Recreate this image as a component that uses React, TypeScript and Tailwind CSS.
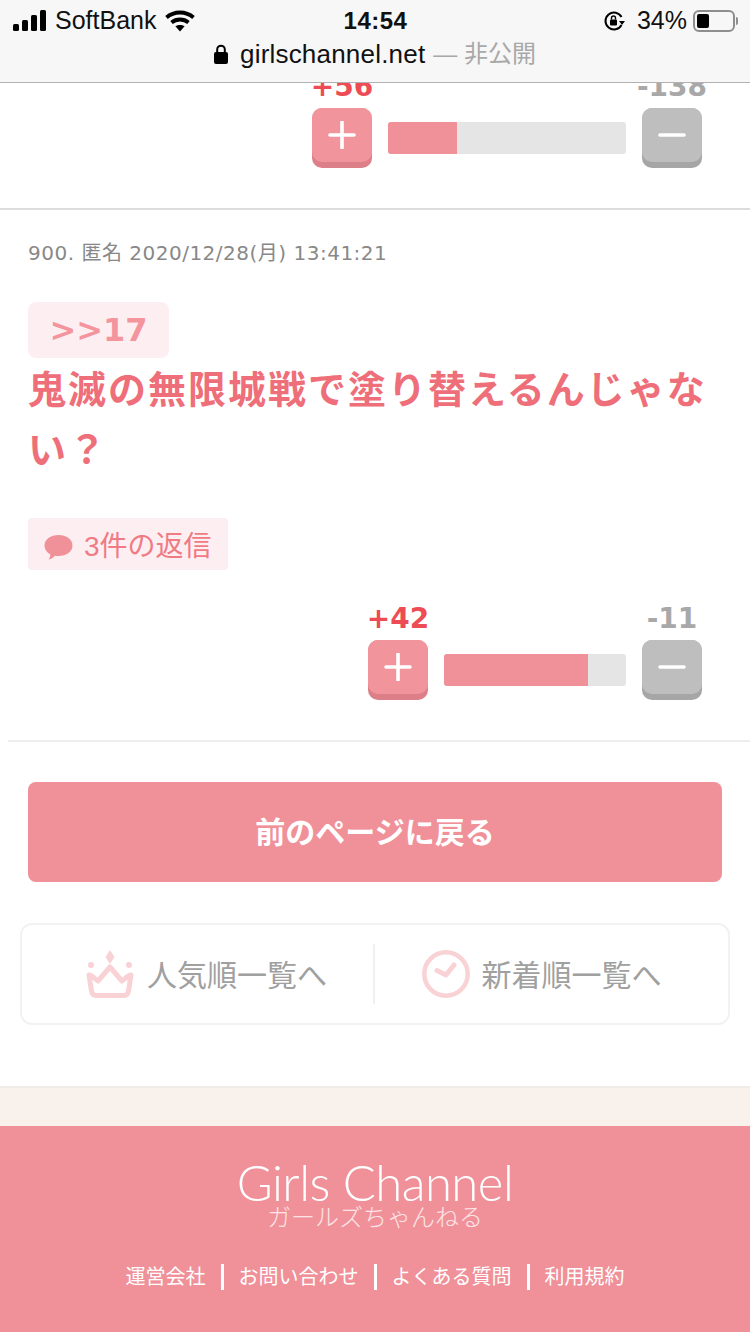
const jp = "font-['Liberation_Sans','Noto_Sans_CJK_JP',sans-serif]";

const StatusBar = () => (
  <header className={`relative z-10 h-[83px] bg-[#f7f7f7] border-b border-[#b2b2b2] ${jp}`}>
    <div className="flex items-center justify-between h-[41px] pl-[13px] pr-[12px] text-[25px] leading-none text-[#111]">
      <div className="flex items-center w-[240px]">
        <svg width="33" height="21" viewBox="0 0 33 21" fill="#000">
          <rect x="0" y="14" width="6" height="7" rx="1.5" />
          <rect x="9" y="10" width="6" height="11" rx="1.5" />
          <rect x="18" y="5" width="6" height="16" rx="1.5" />
          <rect x="27" y="0" width="6" height="21" rx="1.5" />
        </svg>
        <span className="ml-[9px]">SoftBank</span>
        <svg className="ml-[9px]" width="30" height="22" viewBox="0 0 30 22" fill="none" stroke="#000" strokeWidth="3.8">
          <path d="M1.500 7.500C9 .8 21 .8 28.500 7.500" />
          <path d="M6.500 12.500c4.800-4 12.200-4 17 0" />
          <path d="M15 21.500l-4.600-5.200c2.700-1.800 6.500-1.800 9.200 0z" fill="#000" stroke="none" />
        </svg>
      </div>
      <span className="font-bold text-[24px] tracking-[0.5px]">14:54</span>
      <div className="flex items-center justify-end w-[240px]">
        <svg width="21" height="22" viewBox="0 0 21 22" fill="none">
          <path d="M17.500 15A8.500 8.500 0 1 1 17.500 7" stroke="#000" strokeWidth="2" />
          <path d="M15 11h6l-3 4z" fill="#000" />
          <rect x="6" y="9.500" width="7" height="6" rx="1" fill="#000" />
          <path d="M7.500 9.500V8a2 2 0 0 1 4 0v1.500" stroke="#000" strokeWidth="1.400" />
        </svg>
        <span className="ml-[12px]">34%</span>
        <div className="ml-[6px] flex items-center">
          <div className="w-[42px] h-[22px] border-2 border-[#8e8e8e] rounded-[6px] p-[2px]">
            <div className="w-[12px] h-full bg-black rounded-[2px]" />
          </div>
          <div className="w-[2px] h-[8px] ml-[1px] bg-[#8e8e8e] rounded-r-sm" />
        </div>
      </div>
    </div>
    <div className="flex items-center justify-center h-[26px] text-[26px] leading-none">
      <svg width="14" height="20" viewBox="0 0 14 20" fill="#000">
        <rect x="0" y="8" width="14" height="12" rx="2" />
        <path d="M3.200 9V5.500a3.800 3.800 0 0 1 7.600 0V9" fill="none" stroke="#000" strokeWidth="2" />
      </svg>
      <span className="ml-[12px] text-[#111] tracking-[0.2px]">girlschannel.net</span>
      <span className="ml-[8px] text-[#a8a8a8] text-[24px]">— 非公開</span>
    </div>
  </header>
);

const VoteButton = ({ kind }: { kind: 'plus' | 'minus' }) => (
  <div className={`w-[60px] h-[60px] rounded-[10px] ${kind === 'plus' ? 'bg-[#dc7f88]' : 'bg-[#a6a6a6]'}`}>
    <div
      className={`flex items-center justify-center h-[54px] rounded-[10px] ${kind === 'plus' ? 'bg-[#f2949c]' : 'bg-[#bebebe]'}`}
    >
      <svg width="28" height="28" viewBox="0 0 28 28" stroke="#fff" strokeWidth="3.6" strokeLinecap="round">
        <path d="M2 14h24" />
        {kind === 'plus' && <path d="M14 1v26" />}
      </svg>
    </div>
  </div>
);

const Votes = ({ plus, minus, barClass }: { plus: number; minus: number; barClass: string }) => (
  <div className="flex justify-end gap-4 pr-12">
    <div className="flex flex-col items-center w-[60px]">
      <div className="h-[34px] font-['DejaVu_Sans',sans-serif] font-bold text-[28px] leading-[26px] text-[#ee4c55] whitespace-nowrap">
        +{plus}
      </div>
      <VoteButton kind="plus" />
    </div>
    <div className={`${barClass} h-8 mt-[48px] bg-[#e5e5e5] rounded-[3px] overflow-hidden`}>
      <div className="h-full bg-[#f0919a]" style={{ width: `${(plus / (plus + minus)) * 100}%` }} />
    </div>
    <div className="flex flex-col items-center w-[60px]">
      <div className="h-[34px] font-['DejaVu_Sans',sans-serif] font-bold text-[28px] leading-[26px] text-[#a8a8a8] whitespace-nowrap">
        -{minus}
      </div>
      <VoteButton kind="minus" />
    </div>
  </div>
);

const Crown = () => (
  <svg width="48" height="48" viewBox="0 0 48 48" fill="none">
    <path d="M24 0l4.500 7-4.500 7-4.500-7z" fill="#f9d2d6" />
    <circle cx="5" cy="15" r="3" fill="#f9d2d6" />
    <circle cx="43" cy="15" r="3" fill="#f9d2d6" />
    <path
      d="M3 25c3 0 6 4 9 6l12-14 12 14c3-2 6-6 9-6l-2.500 16c-.4 3-2 4.500-4.500 4.500H10c-2.500 0-4.100-1.500-4.500-4.500z"
      stroke="#f9d2d6"
      strokeWidth="5"
      strokeLinejoin="round"
    />
  </svg>
);

const Clock = () => (
  <svg width="48" height="48" viewBox="0 0 48 48" fill="none" stroke="#f9d2d6">
    <circle cx="24" cy="24" r="21.700" strokeWidth="4.500" />
    <path d="M15 20.500l9 4.500 8-10" strokeWidth="5" strokeLinecap="round" strokeLinejoin="round" />
  </svg>
);

export default function App() {
  return (
    <div className={`w-[750px] h-[1334px] overflow-hidden bg-white ${jp}`}>
      <StatusBar />
      <main className="-mt-[9px]">
        <section className="h-[134px]">
          <Votes plus={56} minus={138} barClass="w-[238px]" />
        </section>
        <section className="border-t-2 border-[#dcdcdc] h-[532px] flex flex-col">
          <div className="pl-7 pt-[31px] font-['DejaVu_Sans','Noto_Sans_CJK_JP',sans-serif] text-[20px] leading-[24px] text-[#888] tracking-[0.5px]">
            900. 匿名 2020/12/28(月) 13:41:21
          </div>
          <div className="pl-7 pt-[37px]">
            <span className="flex items-center justify-center w-[141px] h-14 rounded-[8px] bg-[#fdeff1] font-['DejaVu_Sans',sans-serif] font-bold text-[32px] text-[#f4959e]">
              &gt;&gt;17
            </span>
          </div>
          <p className="px-7 text-[38px] leading-[60px] tracking-[2px] font-bold text-[#ee6f79] mt-[2px]">
            鬼滅の無限城戦で塗り替えるんじゃない？
          </p>
          <div className="pl-7 mt-[38px]">
            <div className="flex items-center w-[200px] h-[52px] pl-4 pt-[5px] gap-[11px] rounded-[4px] bg-[#fdeff1] text-[28px] text-[#ef7b85]">
              <svg width="29" height="26" viewBox="0 0 29 26" fill="#f0919a">
                <path d="M14.500 1C22.500 1 28.500 5.500 28.500 11.500S22.500 22 14.500 22c-1.200 0-2.400-.1-3.500-.3C9.500 23.500 7 25 4.500 25.500c1.200-1.500 1.800-3 1.800-5C2.800 18.500.5 15.300.5 11.500.5 5.500 6.500 1 14.500 1z" />
              </svg>
              <span>3件の返信</span>
            </div>
          </div>
          <div className="mt-[36px]">
            <Votes plus={42} minus={11} barClass="w-[182px]" />
          </div>
        </section>
        <div className="ml-2 h-[2px] bg-[#eeeeee]" />
        <div className="px-7 pt-10">
          <button className="w-full h-[100px] rounded-[8px] bg-[#f0919a] text-white text-[30px] font-bold">
            前のページに戻る
          </button>
        </div>
        <nav className="mx-5 mt-[41px] h-[102px] flex items-center rounded-[12px] border-2 border-[#f2f2f2] text-[30px] leading-none text-[#a0a0a0]">
          <a className="flex-1 flex items-center justify-center gap-[13px] pl-[18px]">
            <Crown />
            <span className="pt-[3px]">人気順一覧へ</span>
          </a>
          <div className="w-[2px] h-[60px] bg-[#f0f0f0]" />
          <a className="flex-1 flex items-center justify-center gap-3 pr-[20px]">
            <Clock />
            <span className="pt-[3px]">新着順一覧へ</span>
          </a>
        </nav>
      </main>
      <footer className="mt-[61px] border-t-2 border-[#efebe7] bg-[#f9f2ec] pt-[38px]">
        <div className="h-[206px] bg-[#f0919a] flex flex-col items-center text-white">
          <div className="mt-[33px] font-['Lato',sans-serif] font-light text-[49px] leading-[47px] tracking-[-0.5px]">
            Girls Channel
          </div>
          <div className="text-[24px] leading-[24px] font-light text-[#fde4e6]">ガールズちゃんねる</div>
          <ul className="flex items-center mt-[34px] text-[20px] leading-[26px]">
            <li className="pr-[15px] border-r-[3px] border-white">運営会社</li>
            <li className="px-[15px] border-r-[3px] border-white">お問い合わせ</li>
            <li className="px-[15px] border-r-[3px] border-white">よくある質問</li>
            <li className="pl-[15px]">利用規約</li>
          </ul>
        </div>
      </footer>
    </div>
  );
}
